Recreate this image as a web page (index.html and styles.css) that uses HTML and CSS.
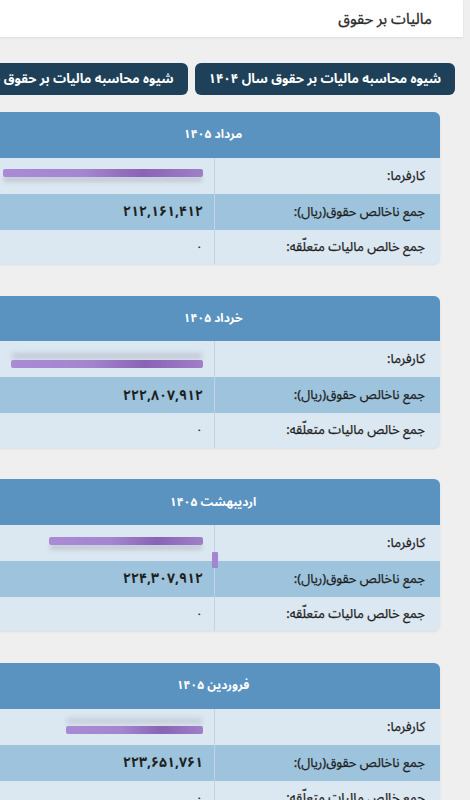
FILE: index.html
```html
<!DOCTYPE html>
<html lang="fa" dir="rtl">
<head>
<meta charset="utf-8">
<link rel="stylesheet" href="styles.css">
</head>
<body>
<div class="page">
  <div class="topbar"><h1 class="title">ماليات بر حقوق</h1></div>
  <div class="buttons">
    <div class="btn">شیوه محاسبه مالیات بر حقوق سال ۱۴۰۴</div>
    <div class="btn">شیوه محاسبه مالیات بر حقوق سال ۱۴۰۵</div>
  </div>
  <div class="cards">
    <div class="card">
      <div class="card-head">مرداد ۱۴۰۵</div>
      <div class="row light"><div class="label">کارفرما:</div><div class="value"><span class="blur b1"></span></div></div>
      <div class="row mid"><div class="label">جمع ناخالص حقوق(ریال):</div><div class="value num">۲۱۲,۱۶۱,۴۱۲</div></div>
      <div class="row light last"><div class="label">جمع خالص مالیات متعلّقه:</div><div class="value">۰</div></div>
    </div>
    <div class="card">
      <div class="card-head">خرداد ۱۴۰۵</div>
      <div class="row light"><div class="label">کارفرما:</div><div class="value"><span class="blur b2"></span></div></div>
      <div class="row mid"><div class="label">جمع ناخالص حقوق(ریال):</div><div class="value num">۲۲۲,۸۰۷,۹۱۲</div></div>
      <div class="row light last"><div class="label">جمع خالص مالیات متعلّقه:</div><div class="value">۰</div></div>
    </div>
    <div class="card">
      <div class="card-head">اردیبهشت ۱۴۰۵</div>
      <div class="row light"><div class="label">کارفرما:</div><div class="value"><span class="blur b3"></span><span class="tick"></span></div></div>
      <div class="row mid"><div class="label">جمع ناخالص حقوق(ریال):</div><div class="value num">۲۲۴,۳۰۷,۹۱۲</div></div>
      <div class="row light last"><div class="label">جمع خالص مالیات متعلّقه:</div><div class="value">۰</div></div>
    </div>
    <div class="card">
      <div class="card-head">فروردین ۱۴۰۵</div>
      <div class="row light"><div class="label">کارفرما:</div><div class="value"><span class="blur b4"></span></div></div>
      <div class="row mid"><div class="label">جمع ناخالص حقوق(ریال):</div><div class="value num">۲۲۳,۶۵۱,۷۶۱</div></div>
      <div class="row light last"><div class="label">جمع خالص مالیات متعلّقه:</div><div class="value">۰</div></div>
    </div>
  </div>
</div>
</body>
</html>
```
FILE: styles.css
```css
html, body {
  margin: 0;
  padding: 0;
  background: #efefef;
  overflow: hidden;
  height: 800px;
}
.page {
  direction: rtl;
  font-family: "Noto Sans Arabic", "DejaVu Sans", sans-serif;
  color: #222;
}
.topbar {
  background: #fff;
  margin-right: 7px;
  height: 37px;
  display: flex;
  align-items: center;
  padding-right: 31px;
  box-shadow: 0 1px 2px rgba(0,0,0,0.08);
}
.title {
  margin: 0;
  font-size: 15px;
  font-weight: normal;
  color: #2a2a2a;
  -webkit-text-stroke: 0.3px #2a2a2a;
}
.buttons {
  display: flex;
  gap: 7px;
  margin-top: 26px;
  padding-right: 15px;
}
.btn {
  flex: none;
  white-space: nowrap;
  height: 32px;
  box-sizing: border-box;
  padding: 0 14px;
  display: flex;
  align-items: center;
  background: #1e4159;
  color: #fff;
  font-size: 13px;
  font-weight: bold;
  border-radius: 6px;
}
.cards {
  display: flex;
  flex-direction: column;
  gap: 31.7px;
  margin-top: 17px;
  padding-right: 30px;
}
.card {
  flex: none;
  width: 454px;
  border-radius: 6px;
  overflow: hidden;
  box-shadow: 0 1px 2px rgba(0,0,0,0.08);
  background: #dae6f1;
}
.card-head {
  height: 45.5px;
  background: #5a92c0;
  color: #fff;
  font-size: 12px;
  font-weight: bold;
  display: flex;
  align-items: center;
  justify-content: center;
}
.row {
  display: flex;
  height: 36px;
  font-size: 13px;
}
.row.last { height: 34.5px; }
.row.light { background: #dbe7f1; }
.row.mid { background: #9dc4dc; }
.label {
  width: 226px;
  flex: none;
  box-sizing: border-box;
  padding-right: 15px;
  display: flex;
  align-items: center;
  border-left: 1px solid #c2d4e2;
  color: #1f1f1f;
  -webkit-text-stroke: 0.25px #1f1f1f;
}
.value {
  flex: 1;
  box-sizing: border-box;
  padding-right: 11px;
  display: flex;
  align-items: center;
  color: #1f1f1f;
  position: relative;
}
.value.num {
  font-size: 14px;
  font-weight: bold;
}
.blur {
  display: block;
  height: 8px;
  border-radius: 2px;
  background: linear-gradient(to left, #a07fc8, #8a63b5 30%, #a486cf 60%, #a88bd4);
  box-shadow: 0 6px 4px -1px rgba(150,150,160,0.35);
}
.b1 { width: 200px; margin-top: -6px; }
.b2 { width: 192px; margin-top: 10px; box-shadow: 0 -8px 5px -1px rgba(150,150,160,0.35); }
.b3 { width: 154px; margin-top: -4px; }
.b4 { width: 137px; margin-top: 6px; box-shadow: 0 -9px 5px -1px rgba(150,150,160,0.3); }
.tick {
  position: absolute;
  right: -4px;
  bottom: -7px;
  width: 6px;
  height: 16px;
  background: #a486cf;
  border-radius: 1px;
}
```
